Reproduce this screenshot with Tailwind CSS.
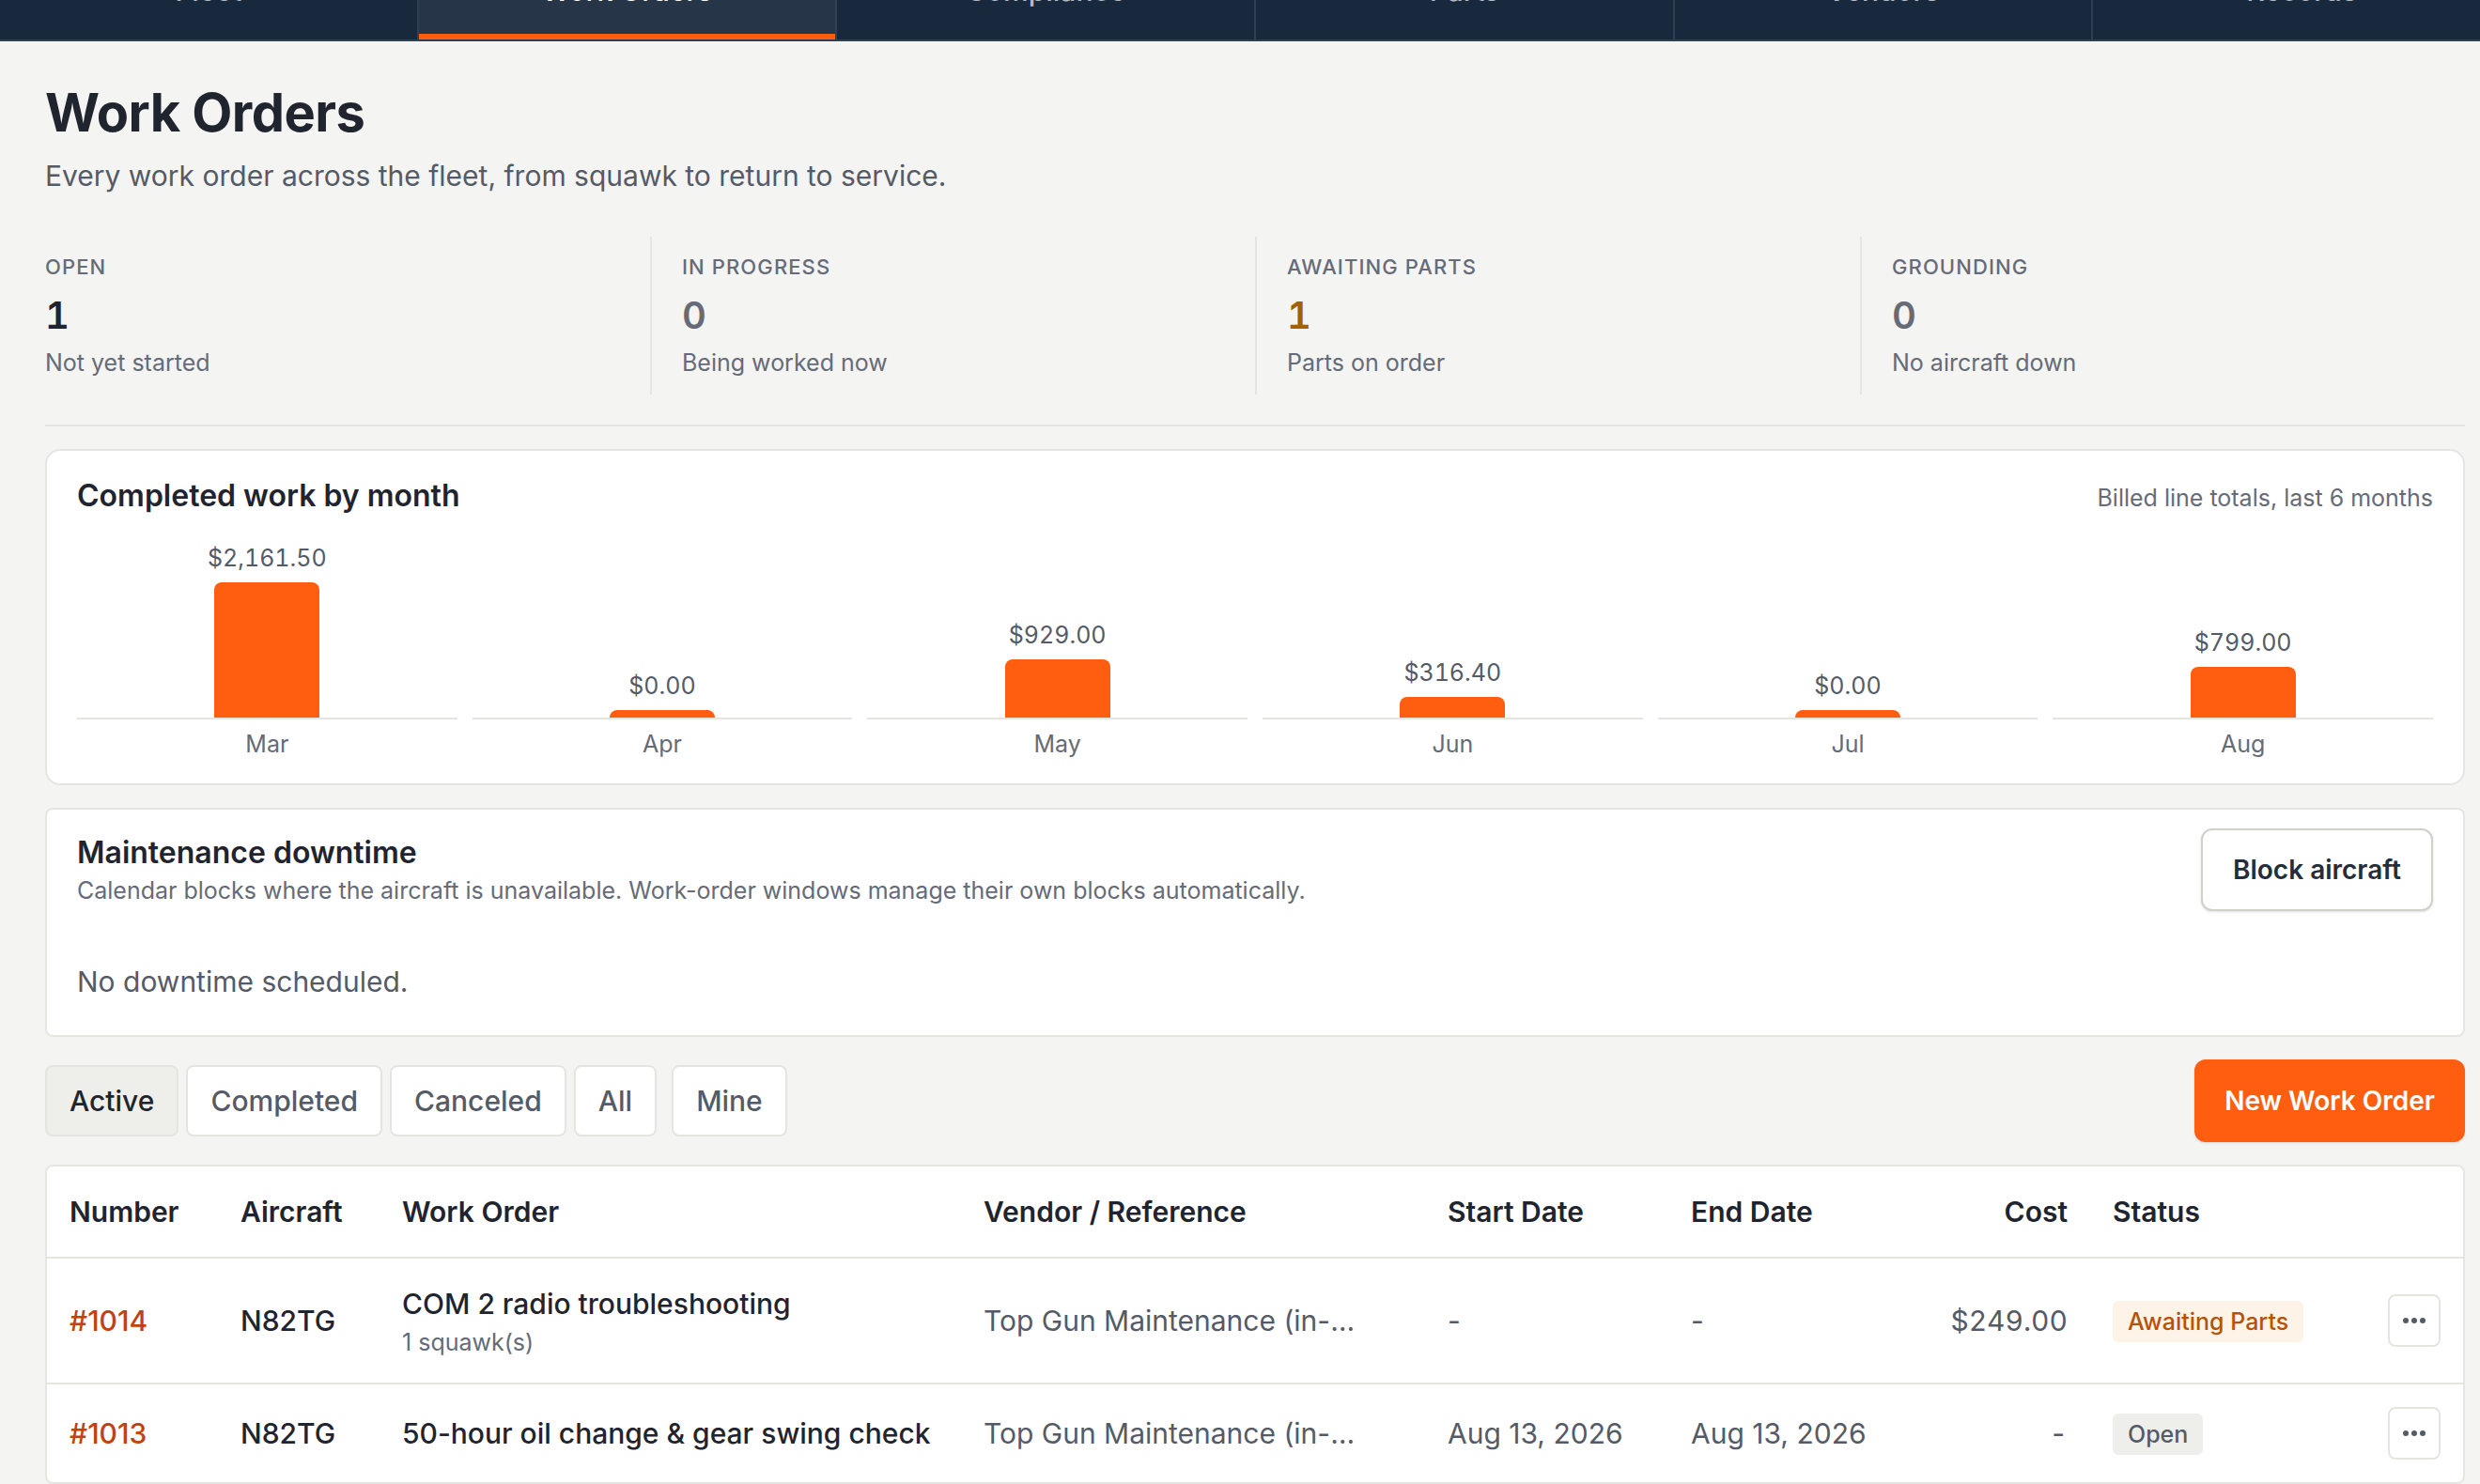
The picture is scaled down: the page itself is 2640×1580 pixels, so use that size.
<!DOCTYPE html>
<html lang="en">
  <head>
    <meta charset="UTF-8" />
    <meta name="viewport" content="width=device-width, initial-scale=1.0" />
    <title>Work Orders</title>
    <script src="https://cdn.jsdelivr.net/npm/@tailwindcss/browser@4"></script>
  </head>
  <body class="min-h-screen overflow-hidden bg-[#f4f4f2] font-['Inter',sans-serif] text-[30px] text-[#1f242e]">
    <!-- Main navigation, scrolled partly out of view -->
    <nav class="-mt-[62px] -mr-8 grid h-[106px] grid-cols-6 gap-0.5 border-b-2 border-[#2f4050] bg-[#2f4050] leading-[44px] font-medium text-[#b4bcc6]">
      <a href="#" class="flex items-center justify-center bg-[#18293e]">Fleet</a>
      <a href="#" aria-current="page" class="flex items-center justify-center bg-[#263648] text-white shadow-[inset_0_-6px_0_#ff5d0f]">Work Orders</a>
      <a href="#" class="flex items-center justify-center bg-[#18293e]">Compliance</a>
      <a href="#" class="flex items-center justify-center bg-[#18293e]">Parts</a>
      <a href="#" class="flex items-center justify-center bg-[#18293e]">Vendors</a>
      <a href="#" class="flex items-center justify-center bg-[#18293e]">Records</a>
    </nav>

    <main class="flex flex-col gap-6 pt-11 pr-4 pb-12 pl-12">
      <!-- Page header and stats -->
      <header class="border-b-2 border-[#e5e5e2] pb-8">
        <h1 class="text-[56px] leading-[64px] font-bold tracking-[-0.01em]">Work Orders</h1>
        <p class="mt-3 mb-[42px] leading-[46px] text-[#555b66]">Every work order across the fleet, from squawk to return to service.</p>
        <dl class="grid grid-cols-4 text-[#666b77]">
          <div class="py-4 pr-8">
            <dt class="text-[22px] leading-8 font-medium tracking-wider uppercase">Open</dt>
            <dd class="mt-2 text-[40px] leading-[56px] font-semibold tabular-nums text-[#1f242e]">1</dd>
            <dd class="mt-1 text-[25px] leading-9">Not yet started</dd>
          </div>
          <div class="border-l-2 border-[#e5e5e2] px-8 py-4">
            <dt class="text-[22px] leading-8 font-medium tracking-wider uppercase">In progress</dt>
            <dd class="mt-2 text-[40px] leading-[56px] font-semibold tabular-nums">0</dd>
            <dd class="mt-1 text-[25px] leading-9">Being worked now</dd>
          </div>
          <div class="border-l-2 border-[#e5e5e2] px-8 py-4">
            <dt class="text-[22px] leading-8 font-medium tracking-wider uppercase">Awaiting parts</dt>
            <dd class="mt-2 text-[40px] leading-[56px] font-semibold tabular-nums text-[#a16207]">1</dd>
            <dd class="mt-1 text-[25px] leading-9">Parts on order</dd>
          </div>
          <div class="border-l-2 border-[#e5e5e2] px-8 py-4">
            <dt class="text-[22px] leading-8 font-medium tracking-wider uppercase">Grounding</dt>
            <dd class="mt-2 text-[40px] leading-[56px] font-semibold tabular-nums">0</dd>
            <dd class="mt-1 text-[25px] leading-9">No aircraft down</dd>
          </div>
        </dl>
      </header>

      <!-- Monthly chart -->
      <section class="rounded-2xl border-2 border-[#e5e5e2] bg-white px-8 py-6">
        <div class="mb-6 flex h-12 items-baseline justify-between">
          <h2 class="text-[32px] leading-[48px] font-semibold">Completed work by month</h2>
          <p class="text-[25px] leading-9 text-[#666b77]">Billed line totals, last 6 months</p>
        </div>
        <div id="chart" class="grid grid-cols-6 gap-4 text-[25px] leading-9"></div>
      </section>

      <!-- Downtime -->
      <section class="rounded-lg border-2 border-[#e5e5e2] bg-white px-8">
        <div class="flex items-center justify-between py-5">
          <div>
            <h2 class="text-[32px] leading-[44px] font-semibold">Maintenance downtime</h2>
            <p class="text-[25px] leading-9 text-[#666b77]">Calendar blocks where the aircraft is unavailable. Work-order windows manage their own blocks automatically.</p>
          </div>
          <button type="button" class="h-[88px] rounded-xl border-2 border-[#d0d1c9] bg-white px-8 text-[28px] font-semibold text-[#262d3a] shadow-sm">Block aircraft</button>
        </div>
        <p class="pt-8 pb-[34px] leading-[46px] text-[#555b66]">No downtime scheduled.</p>
      </section>

      <!-- Filters -->
      <div class="flex items-center justify-between">
        <div class="flex gap-2 font-medium text-[#555b66]">
          <button type="button" class="h-[76px] rounded-lg border-2 border-[#e5e5e0] bg-[#eeefeb] px-6 text-[#1f242e]">Active</button>
          <button type="button" class="h-[76px] rounded-lg border-2 border-[#e5e5e0] bg-white px-6">Completed</button>
          <button type="button" class="h-[76px] rounded-lg border-2 border-[#e5e5e0] bg-white px-6">Canceled</button>
          <button type="button" class="h-[76px] rounded-lg border-2 border-[#e5e5e0] bg-white px-6">All</button>
          <button type="button" class="ml-2 h-[76px] rounded-lg border-2 border-[#e5e5e0] bg-white px-6">Mine</button>
        </div>
        <button type="button" class="h-[88px] rounded-xl bg-[#ff5d0f] px-8 text-[28px] font-semibold text-white shadow-sm">New Work Order</button>
      </div>

      <!-- Work orders table -->
      <div class="overflow-hidden rounded-lg border-2 border-[#e5e5e2] bg-white">
        <table class="w-full table-fixed text-left text-[#555b66]">
          <colgroup>
            <col class="w-[182px]" />
            <col class="w-[172px]" />
            <col />
            <col class="w-[494px]" />
            <col class="w-[259px]" />
            <col class="w-[259px]" />
            <col class="w-[190px]" />
            <col class="w-[293px]" />
            <col class="w-[104px]" />
          </colgroup>
          <thead class="border-b-2 border-[#e5e5e0] text-[#1f242e]">
            <tr class="h-[97px]">
              <th class="px-6 font-semibold">Number</th>
              <th class="px-6 font-semibold">Aircraft</th>
              <th class="px-6 font-semibold">Work Order</th>
              <th class="px-6 font-semibold">Vendor / Reference</th>
              <th class="px-6 font-semibold">Start Date</th>
              <th class="px-6 font-semibold">End Date</th>
              <th class="px-6 text-right font-semibold">Cost</th>
              <th class="px-6 font-semibold">Status</th>
              <th class="px-6"></th>
            </tr>
          </thead>
          <tbody>
            <tr class="h-[134px] border-b-2 border-[#e5e5e0]">
              <td class="px-6 font-medium"><a href="#" class="text-[#c2410c]">#1014</a></td>
              <td class="px-6 font-medium text-[#1f242e]">N82TG</td>
              <td class="px-6">
                <div class="leading-[46px] font-medium text-[#1f242e]">COM 2 radio troubleshooting</div>
                <div class="text-[25px] leading-9 text-[#666b77]">1 squawk(s)</div>
              </td>
              <td class="px-6"><div class="max-w-[400px] truncate">Top Gun Maintenance (in-house)</div></td>
              <td class="px-6">-</td>
              <td class="px-6">-</td>
              <td class="px-6 text-right tabular-nums">$249.00</td>
              <td class="px-6"><span class="inline-flex h-11 items-center rounded-md bg-[#fef3e7] px-4 text-[25px] font-medium text-[#b45309]">Awaiting Parts</span></td>
              <td class="px-6">
                <button type="button" aria-label="Actions for #1014" class="flex size-14 items-center justify-center rounded-lg border-2 border-[#e5e5e0]">
                  <svg class="size-7" viewBox="0 0 28 28" fill="currentColor"><circle cx="5" cy="14" r="3" /><circle cx="14" cy="14" r="3" /><circle cx="23" cy="14" r="3" /></svg>
                </button>
              </td>
            </tr>
            <tr class="h-[105px]">
              <td class="px-6 font-medium"><a href="#" class="text-[#c2410c]">#1013</a></td>
              <td class="px-6 font-medium text-[#1f242e]">N82TG</td>
              <td class="px-6 font-medium text-[#1f242e]">50-hour oil change &amp; gear swing check</td>
              <td class="px-6"><div class="max-w-[400px] truncate">Top Gun Maintenance (in-house)</div></td>
              <td class="px-6">Aug 13, 2026</td>
              <td class="px-6">Aug 13, 2026</td>
              <td class="px-6 text-right tabular-nums">-</td>
              <td class="px-6"><span class="inline-flex h-11 items-center rounded-md bg-[#eeefeb] px-4 text-[25px] font-medium">Open</span></td>
              <td class="px-6">
                <button type="button" aria-label="Actions for #1013" class="flex size-14 items-center justify-center rounded-lg border-2 border-[#e5e5e0]">
                  <svg class="size-7" viewBox="0 0 28 28" fill="currentColor"><circle cx="5" cy="14" r="3" /><circle cx="14" cy="14" r="3" /><circle cx="23" cy="14" r="3" /></svg>
                </button>
              </td>
            </tr>
          </tbody>
        </table>
      </div>
    </main>

    <script>
      const months = [
        { label: 'Mar', total: 2161.5 },
        { label: 'Apr', total: 0 },
        { label: 'May', total: 929 },
        { label: 'Jun', total: 316.4 },
        { label: 'Jul', total: 0 },
        { label: 'Aug', total: 799 },
      ];
      const maxBar = 144;
      const maxTotal = Math.max(...months.map(m => m.total));

      function money(n) {
        return n.toLocaleString('en-US', { style: 'currency', currency: 'USD' });
      }

      document.getElementById('chart').innerHTML = months.map(m => {
        // empty months still show a stub
        const height = Math.max(8, Math.ceil(m.total / maxTotal * maxBar));
        return `
          <div class="flex flex-col justify-end text-center">
            <div class="mb-2 tabular-nums text-[#555b66]">${money(m.total)}</div>
            <div class="flex justify-center border-b-2 border-[#e5e5e0]">
              <div class="w-28 rounded-t-lg bg-[#ff5d0f]" style="height: ${height}px"></div>
            </div>
            <div class="mt-2 text-[#666b77]">${m.label}</div>
          </div>`;
      }).join('');
    </script>
  </body>
</html>
